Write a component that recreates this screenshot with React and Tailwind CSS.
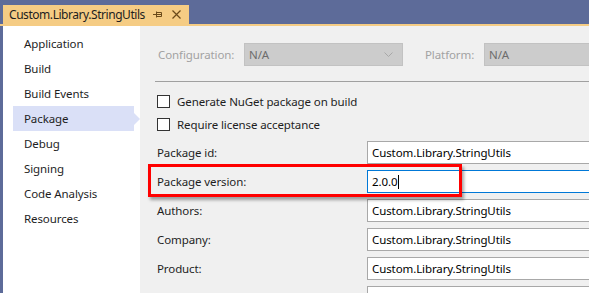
const navItems = [
  "Application",
  "Build",
  "Build Events",
  "Package",
  "Debug",
  "Signing",
  "Code Analysis",
  "Resources",
];

const fields = [
  { label: "Package id:", value: "Custom.Library.StringUtils" },
  { label: "Package version:", value: "2.0.0", focused: true },
  { label: "Authors:", value: "Custom.Library.StringUtils" },
  { label: "Company:", value: "Custom.Library.StringUtils" },
  { label: "Product:", value: "Custom.Library.StringUtils" },
  { label: "", value: "" },
];

const Chevron = () => (
  <svg className="w-[9px] h-[6px]" viewBox="0 0 9 6" fill="none" stroke="#a8a8a8" strokeWidth="1">
    <path d="M0.5 0.5l4 4 4-4" />
  </svg>
);

const Dropdown = ({ className }) => (
  <div className={`shrink-0 h-[23px] bg-[#cccccc] border border-[#c2c2c2] flex items-center justify-between pl-[4px] pr-[9px] text-[#6d6d6d] ${className}`}>
    <span>N/A</span>
    <Chevron />
  </div>
);

const Checkbox = ({ label }) => (
  <div className="flex items-center h-[23px]">
    <span className="shrink-0 w-[13px] h-[13px] border border-[#333333] bg-white" />
    <span className="ml-[7px] text-[#1e1e1e]">{label}</span>
  </div>
);

export default function App() {
  return (
    <div
      className="w-[589px] h-[293px] overflow-hidden flex flex-col bg-[#5d6b99] text-[11.5px] tracking-[-0.1px] leading-none"
      style={{ fontFamily: '"Noto Sans", "Segoe UI", sans-serif' }}
    >
      <div className="shrink-0 h-[24px] flex items-end pl-[3px]">
        <div className="h-[19px] w-[186px] bg-[#f5cc84] flex items-center pl-[6px] text-[#1e1e1e]">
          <span className="text-[12px] tracking-[-0.45px]">Custom.Library.StringUtils</span>
          <svg className="ml-auto w-[10px] h-[9px]" viewBox="0 0 10 9" fill="none" stroke="#6b4a1a" strokeWidth="1">
            <path d="M0 4.5h3.5M3.5 1.5v6M3.5 2.5h5v4h-5M3.5 4.5h5" />
          </svg>
          <svg className="ml-[9px] mr-[8px] w-[9px] h-[9px]" viewBox="0 0 9 9" fill="none" stroke="#6b4a1a" strokeWidth="1.2">
            <path d="M0.5 0.5l8 8M8.5 0.5l-8 8" />
          </svg>
        </div>
      </div>
      <div className="shrink-0 h-[2px] bg-[#f5cc84]" />
      <div className="flex-1 min-h-0 flex pl-[3px]">
        <nav className="shrink-0 w-[137px] bg-white pt-[5px] pl-[10px]">
          {navItems.map((item) => {
            const active = item === "Package";
            return (
              <div key={item} className="relative h-[25px] w-[121px] flex items-center">
                {active && (
                  <>
                    <div className="absolute inset-0 bg-[#dae0f7]" />
                    <div className="absolute left-full top-1/2 -translate-y-1/2 w-0 h-0 border-y-[6px] border-y-transparent border-l-[6px] border-l-[#dae0f7]" />
                  </>
                )}
                <span className="relative pl-[11px] text-[#1e1e1e]">{item}</span>
              </div>
            );
          })}
        </nav>
        <main className="relative flex-1 min-w-0 overflow-hidden bg-[#f0f0f0] pt-[17px]">
          <div className="flex items-center">
            <span className="shrink-0 ml-[18px] w-[86px] text-[#a2a2a2]">Configuration:</span>
            <Dropdown className="w-[159px]" />
            <span className="shrink-0 ml-[22px] w-[59px] text-[#a2a2a2]">Platform:</span>
            <Dropdown className="w-[140px]" />
          </div>
          <div className="ml-[15px] mt-[15px] h-px bg-[#a0a0a0]" />
          <div className="ml-[17px] mt-[8px] flex flex-col">
            <Checkbox label="Generate NuGet package on build" />
            <Checkbox label="Require license acceptance" />
          </div>
          <div className="mt-[5px] flex flex-col gap-[6px]">
            {fields.map((f, i) => (
              <div key={i} className="flex items-center h-[23px]">
                <span className="shrink-0 ml-[17px] w-[210px] text-[#1e1e1e]">{f.label}</span>
                <div
                  className={`shrink-0 h-[23px] w-[240px] bg-white flex items-center pl-[4px] text-black border ${
                    f.focused ? "border-[#0078d7]" : "border-[#a8a8a8]"
                  }`}
                >
                  {f.value}
                  {f.focused && <span className="ml-px w-px h-[14px] bg-black" />}
                </div>
              </div>
            ))}
          </div>
          <div className="absolute left-[8px] top-[138px] w-[314px] h-[33px] border-[3px] border-[#ff0000] shadow-[2px_3px_3px_rgba(0,0,0,0.35)]" />
        </main>
      </div>
    </div>
  );
}
